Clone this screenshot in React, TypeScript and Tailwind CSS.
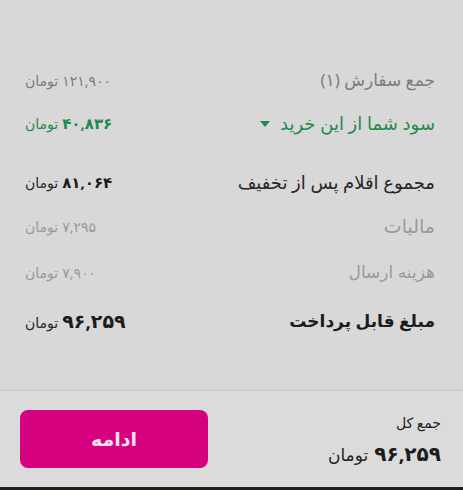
const FONT = '"Noto Sans", "DejaVu Sans", sans-serif'

function Row({
  label,
  value,
  labelCls,
  valueCls,
  unitCls,
  className,
  caret = false,
}: {
  label: string
  value: string
  labelCls: string
  valueCls: string
  unitCls: string
  className: string
  caret?: boolean
}) {
  return (
    <div className={`flex h-[44px] items-center justify-between ${className}`}>
      <div className={`flex items-center gap-[10px] ${labelCls}`}>
        <span>{label}</span>
        {caret && (
          <svg width="10" height="6" viewBox="0 0 10 6" className="mt-0.5">
            <path d="M0 0h10L5 6z" fill="currentColor" />
          </svg>
        )}
      </div>
      <div className="flex items-baseline gap-1">
        <span className={valueCls}>{value}</span>
        <span className={unitCls}>تومان</span>
      </div>
    </div>
  )
}

export default function App() {
  return (
    <div
      dir="rtl"
      className="flex h-[490px] w-[463px] flex-col bg-[#d8d8d8]"
      style={{ fontFamily: FONT }}
    >
      <div className="h-[390px] pl-[25px] pr-[28px] pt-[58px]">
        <Row
          label="جمع سفارش (۱)"
          value="۱۲۱,۹۰۰"
          labelCls="text-[17px] text-[#7b7b7b]"
          valueCls="text-[14px] text-[#7b7b7b]"
          unitCls="text-[14px] text-[#7b7b7b]"
          className=""
        />
        <Row
          label="سود شما از این خرید"
          value="۴۰,۸۳۶"
          labelCls="text-[18px] text-[#1f8a4c]"
          valueCls="text-[15px] font-bold text-[#1f8a4c]"
          unitCls="text-[14px] text-[#1f8a4c]"
          className="mt-[-1px]"
          caret
        />
        <Row
          label="مجموع اقلام پس از تخفیف"
          value="۸۱,۰۶۴"
          labelCls="text-[18px] text-[#262626]"
          valueCls="text-[15px] font-bold text-[#1c1c1c]"
          unitCls="text-[14px] text-[#262626]"
          className="mt-[15px]"
        />
        <Row
          label="مالیات"
          value="۷,۲۹۵"
          labelCls="text-[19px] text-[#9a9a9a]"
          valueCls="text-[14px] text-[#9a9a9a]"
          unitCls="text-[14px] text-[#9a9a9a]"
          className=""
        />
        <Row
          label="هزینه ارسال"
          value="۷,۹۰۰"
          labelCls="text-[17px] text-[#9a9a9a]"
          valueCls="text-[14px] text-[#9a9a9a]"
          unitCls="text-[14px] text-[#9a9a9a]"
          className="mt-[2px]"
        />
        <Row
          label="مبلغ قابل پرداخت"
          value="۹۶,۲۵۹"
          labelCls="text-[17px] font-bold text-[#1c1c1c]"
          valueCls="text-[19px] font-bold text-[#1c1c1c]"
          unitCls="text-[14px] text-[#262626]"
          className="mt-[5px]"
        />
      </div>
      <div className="flex flex-1 items-center justify-between border-t border-[#c6c6c6] bg-[#dbdbdb] pl-[20px] pr-[22px]">
        <div className="flex flex-col gap-[6px] pt-[2px]">
          <span className="text-[14px] text-[#222]">جمع کل</span>
          <div className="flex items-baseline gap-1.5">
            <span className="text-[20px] font-bold text-[#1c1c1c]">۹۶,۲۵۹</span>
            <span className="text-[17px] text-[#222]">تومان</span>
          </div>
        </div>
        <button
          type="button"
          className="flex h-[58px] w-[188px] items-center justify-center rounded-lg bg-[#d6017f] text-[19px] font-bold text-[#f7e0ec]"
        >
          ادامه
        </button>
      </div>
      <div className="h-[3px] bg-[#1d1d22]" />
    </div>
  )
}
